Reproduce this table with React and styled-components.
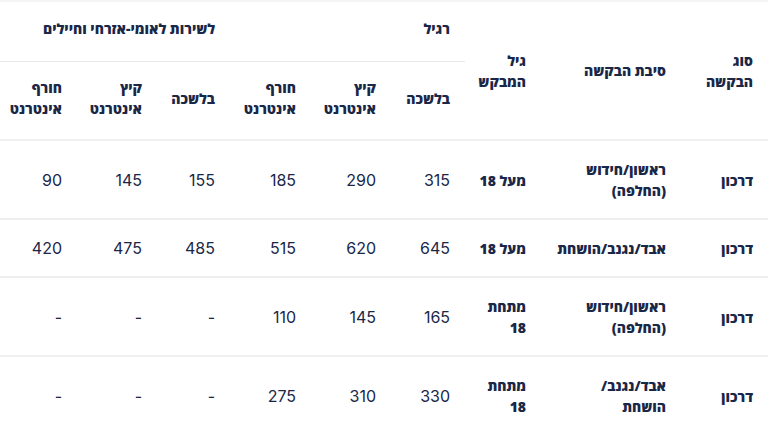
import React from "react";
import styled, { createGlobalStyle } from "styled-components";

const Global = createGlobalStyle`
  html, body { margin: 0; padding: 0; background: #ffffff; }
  body { font-family: Inter, "Open Sans", sans-serif; color: #1a2747; }
`;

const Table = styled.table`
  width: 768px;
  border-collapse: collapse;
  table-layout: fixed;
  direction: rtl;
  border-top: 2px solid #f4f4f4;
`;

const HeadCell = styled.th`
  text-align: right;
  vertical-align: middle;
  font-family: "Open Sans", Inter, sans-serif;
  font-weight: 800;
  font-size: 14px;
  line-height: 21px;
  padding: ${(p) => (p.$group ? "16px 15px 22px 10px" : p.$sub ? "15px 15px 20px 10px" : "0 15px 0 10px")};
  border-bottom: ${(p) => (p.$group ? "1px solid #e9e9e9" : "2px solid #efefef")};
`;

const Row = styled.tr`
  border-bottom: 2px solid #efefef;
`;

const Cell = styled.td`
  text-align: right;
  vertical-align: middle;
  padding: 18px 15px 17px 10px;
  line-height: 21px;
  font-family: ${(p) => (p.$num ? "Inter, sans-serif" : '"Open Sans", Inter, sans-serif')};
  font-size: ${(p) => (p.$num ? "16px" : "14px")};
  font-weight: ${(p) => (p.$num ? 400 : 800)};
  white-space: ${(p) => (p.$nowrap ? "nowrap" : "normal")};
`;

const ReasonCell = styled(Cell)`
  padding-left: 22px;
`;

const widths = [87, 140, 76, 74, 80, 81, 73, 80, 77];

const rows = [
  { type: "דרכון", reason: "ראשון/חידוש (החלפה)", age: "מעל 18", vals: ["315", "290", "185", "155", "145", "90"] },
  { type: "דרכון", reason: "אבד/נגנב/הושחת", age: "מעל 18", vals: ["645", "620", "515", "485", "475", "420"], nowrap: true },
  { type: "דרכון", reason: "ראשון/חידוש (החלפה)", age: "מתחת 18", vals: ["165", "145", "110", "-", "-", "-"] },
  { type: "דרכון", reason: "אבד/נגנב/ הושחת", age: "מתחת 18", vals: ["330", "310", "275", "-", "-", "-"] },
];

export default function App() {
  return (
    <>
      <Global />
      <Table dir="rtl">
        <colgroup>
          {widths.map((w, i) => (
            <col key={i} style={{ width: w }} />
          ))}
        </colgroup>
        <thead>
          <tr>
            <HeadCell rowSpan={2}>סוג הבקשה</HeadCell>
            <HeadCell rowSpan={2}>סיבת הבקשה</HeadCell>
            <HeadCell rowSpan={2}>גיל המבקש</HeadCell>
            <HeadCell $group colSpan={3}>רגיל</HeadCell>
            <HeadCell $group colSpan={3}>לשירות לאומי-אזרחי וחיילים</HeadCell>
          </tr>
          <tr>
            <HeadCell $sub>בלשכה</HeadCell>
            <HeadCell $sub>קיץ אינטרנט</HeadCell>
            <HeadCell $sub>חורף אינטרנט</HeadCell>
            <HeadCell $sub>בלשכה</HeadCell>
            <HeadCell $sub>קיץ אינטרנט</HeadCell>
            <HeadCell $sub>חורף אינטרנט</HeadCell>
          </tr>
        </thead>
        <tbody>
          {rows.map((r, i) => (
            <Row key={i}>
              <Cell>{r.type}</Cell>
              <ReasonCell $nowrap={r.nowrap}>{r.reason}</ReasonCell>
              <Cell>{r.age}</Cell>
              {r.vals.map((v, j) => (
                <Cell $num key={j}>{v}</Cell>
              ))}
            </Row>
          ))}
        </tbody>
      </Table>
    </>
  );
}
